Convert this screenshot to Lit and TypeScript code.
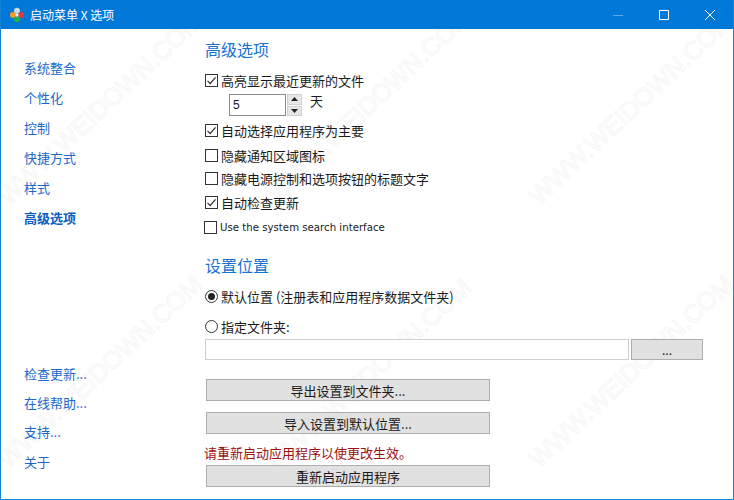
import { LitElement, html, css, svg } from "lit";
import { customElement } from "lit/decorators.js";

const CHECK = html`<svg class="mark" viewBox="0 0 11 11" width="11" height="11"><path d="M1.5 5.8 L4.2 8.5 L9.6 2.4" fill="none" stroke="#333" stroke-width="1.2"/></svg>`;
const MARKS: [number, number][] = [[7, 206], [276, 202], [538, 206], [7, 469], [276, 472], [538, 469]];

@customElement("app-root")
export class AppRoot extends LitElement {
  static styles = css`
    :host { display: block; width: 734px; height: 500px; overflow: hidden; font-family: "Noto Sans CJK SC", "Liberation Sans", sans-serif; font-size: 13px; color: #1a1a1a; }
    * { box-sizing: border-box; }
    .win { position: relative; width: 734px; height: 500px; display: flex; flex-direction: column; background: #fff; border: 1px solid #1483d8; border-width: 0 1px 1px 1px; overflow: hidden; }
    .title { position: relative; z-index: 1; height: 29px; flex: none; margin: 0 -1px; background: #0078d7; color: #fff; display: flex; align-items: center; padding: 0 1px 0 9px; font-size: 12px; }
    .logo { margin-right: 5px; flex: none; }
    .titletext { flex: 1; }
    .ctl { width: 46px; height: 29px; display: flex; align-items: center; justify-content: center; }
    .body { position: relative; z-index: 1; flex: 1; display: flex; min-height: 0; }
    nav { width: 204px; flex: none; display: flex; flex-direction: column; justify-content: space-between; padding: 24px 0 23px 23px; color: #1a68cc; }
    .navgroup { display: flex; flex-direction: column; }
    .navgroup a { height: 30px; line-height: 30px; }
    .navgroup.low a { height: 29.33px; line-height: 29.33px; }
    .navgroup a.on { font-weight: 700; color: #0b5cc0; }
    main { flex: 1; display: flex; flex-direction: column; padding-top: 10px; min-width: 0; }
    h2 { margin: 0; font-size: 16px; font-weight: 400; color: #1473d4; height: 21px; line-height: 21px; }
    .gap-h { height: 8px; flex: none; }
    .row { display: flex; align-items: center; height: 24px; gap: 3px; flex: none; }
    .row.lower { margin-top: 1px; }
    .row.tight { margin-top: -1px; }
    .box { width: 13px; height: 13px; border: 1px solid #333; background: #fff; display: flex; align-items: center; justify-content: center; flex: none; }
    .mark { display: block; }
    .radio { width: 13px; height: 13px; border: 1px solid #333; border-radius: 50%; background: #fff; display: flex; align-items: center; justify-content: center; flex: none; }
    .radio i { width: 7px; height: 7px; border-radius: 50%; background: #222; display: block; }
    .spinrow { display: flex; height: 24px; margin: 1px 0 1px 24px; gap: 8px; align-items: center; flex: none; }
    .spin { display: flex; gap: 1px; height: 22px; }
    .num { width: 57px; height: 22px; border: 1px solid #8a8a8a; padding-left: 3px; line-height: 20px; background: #fff; font-family: "Liberation Sans", sans-serif; font-size: 12px; }
    .arrows { width: 15px; display: flex; flex-direction: column; gap: 1px; }
    .arrows span { flex: 1; background: #e6e6e6; border: 1px solid #d0d0d0; display: flex; align-items: center; justify-content: center; }
    .day { margin-bottom: 9px; }
    .latin { font-family: "DejaVu Sans", sans-serif; font-size: 10.2px; margin-left: -1px; padding-top: 2px; }
    .gap-sec { height: 17px; flex: none; }
    .gap-radio { height: 8px; flex: none; }
    .gap-radio2 { height: 6px; flex: none; }
    .path { display: flex; gap: 2px; height: 21px; margin: 1px 30px 0 0; flex: none; }
    .path div { flex: 1; border: 1px solid #cfcfcf; background: #fff; }
    .btn { height: 22px; background: #e1e1e1; border: 1px solid #adadad; display: flex; align-items: center; justify-content: center; color: #1a1a1a; flex: none; }
    .path .btn { width: 72px; height: 21px; font-size: 12px; }
    .gap-act { height: 19px; flex: none; }
    .gap-btn { height: 11px; flex: none; }
    .actions { display: flex; flex-direction: column; margin-left: 1px; width: 284px; }
    .warn { color: #9b1010; height: 31px; display: flex; align-items: center; margin-left: -2px; padding-top: 5px; flex: none; }
    .wm { position: absolute; z-index: 0; left: 0; top: 0; width: 734px; height: 500px; pointer-events: none; }
    .wm text { font-family: "Liberation Sans", sans-serif; font-size: 25px; fill: #fff; stroke: #f4f4f4; stroke-width: 0.8; }
  `;

  private row(label: string, checked: boolean, cls = "") {
    return html`<div class="row ${cls}"><span class="box">${checked ? CHECK : ""}</span><span>${label}</span></div>`;
  }

  render() {
    const top = ["系统整合", "个性化", "控制", "快捷方式", "样式"];
    const low = ["检查更新...", "在线帮助...", "支持...", "关于"];
    return html`<div class="win">
      <svg class="wm" viewBox="0 0 734 500">
        ${MARKS.map(([x, y]) => svg`<text transform="translate(${x} ${y}) rotate(-43)">WWW.WEIDOWN.COM</text>`)}
      </svg>
      <header class="title">
        <svg class="logo" width="16" height="16" viewBox="0 0 16 16">
          <circle cx="8" cy="3.8" r="3" fill="#cfd8e6"/>
          <circle cx="4" cy="8" r="3" fill="#f59a23"/>
          <circle cx="12" cy="8" r="3" fill="#e23b3b"/>
          <circle cx="8" cy="12.2" r="3" fill="#22b14c"/>
          <circle cx="8" cy="8" r="1.6" fill="#fff"/>
        </svg>
        <span class="titletext">启动菜单 X 选项</span>
        <span class="ctl"><svg width="10" height="10" viewBox="0 0 10 10"><path d="M0 5.5H10" stroke="#5aa9e6" fill="none"/></svg></span>
        <span class="ctl"><svg width="10" height="10" viewBox="0 0 10 10"><path d="M.5.5h9v9h-9z" stroke="#fff" fill="none"/></svg></span>
        <span class="ctl"><svg width="10" height="10" viewBox="0 0 10 10"><path d="M0 0L10 10M10 0L0 10" stroke="#fff" fill="none"/></svg></span>
      </header>
      <div class="body">
        <nav>
          <div class="navgroup">
            ${top.map((t) => html`<a>${t}</a>`)}
            <a class="on">高级选项</a>
          </div>
          <div class="navgroup low">${low.map((t) => html`<a>${t}</a>`)}</div>
        </nav>
        <main>
          <h2>高级选项</h2>
          <div class="gap-h"></div>
          ${this.row("高亮显示最近更新的文件", true)}
          <div class="spinrow">
            <div class="spin">
              <div class="num">5</div>
              <div class="arrows">
                <span><svg width="7" height="4" viewBox="0 0 7 4"><path d="M3.5 0L7 4H0z" fill="#222"/></svg></span>
                <span><svg width="7" height="4" viewBox="0 0 7 4"><path d="M0 0H7L3.5 4z" fill="#222"/></svg></span>
              </div>
            </div>
            <span class="day">天</span>
          </div>
          ${this.row("自动选择应用程序为主要", true)}
          ${this.row("隐藏通知区域图标", false, "lower")}
          ${this.row("隐藏电源控制和选项按钮的标题文字", false, "tight")}
          ${this.row("自动检查更新", true)}
          <div class="row latin"><span class="box"></span><span>Use the system search interface</span></div>
          <div class="gap-sec"></div>
          <h2>设置位置</h2>
          <div class="gap-radio"></div>
          <div class="row"><span class="radio"><i></i></span><span>默认位置 (注册表和应用程序数据文件夹)</span></div>
          <div class="gap-radio2"></div>
          <div class="row"><span class="radio"></span><span>指定文件夹:</span></div>
          <div class="path"><div></div><span class="btn">...</span></div>
          <div class="gap-act"></div>
          <div class="actions">
            <span class="btn">导出设置到文件夹...</span>
            <div class="gap-btn"></div>
            <span class="btn">导入设置到默认位置...</span>
            <div class="warn">请重新启动应用程序以使更改生效。</div>
            <span class="btn">重新启动应用程序</span>
          </div>
        </main>
      </div>
    </div>`;
  }
}
